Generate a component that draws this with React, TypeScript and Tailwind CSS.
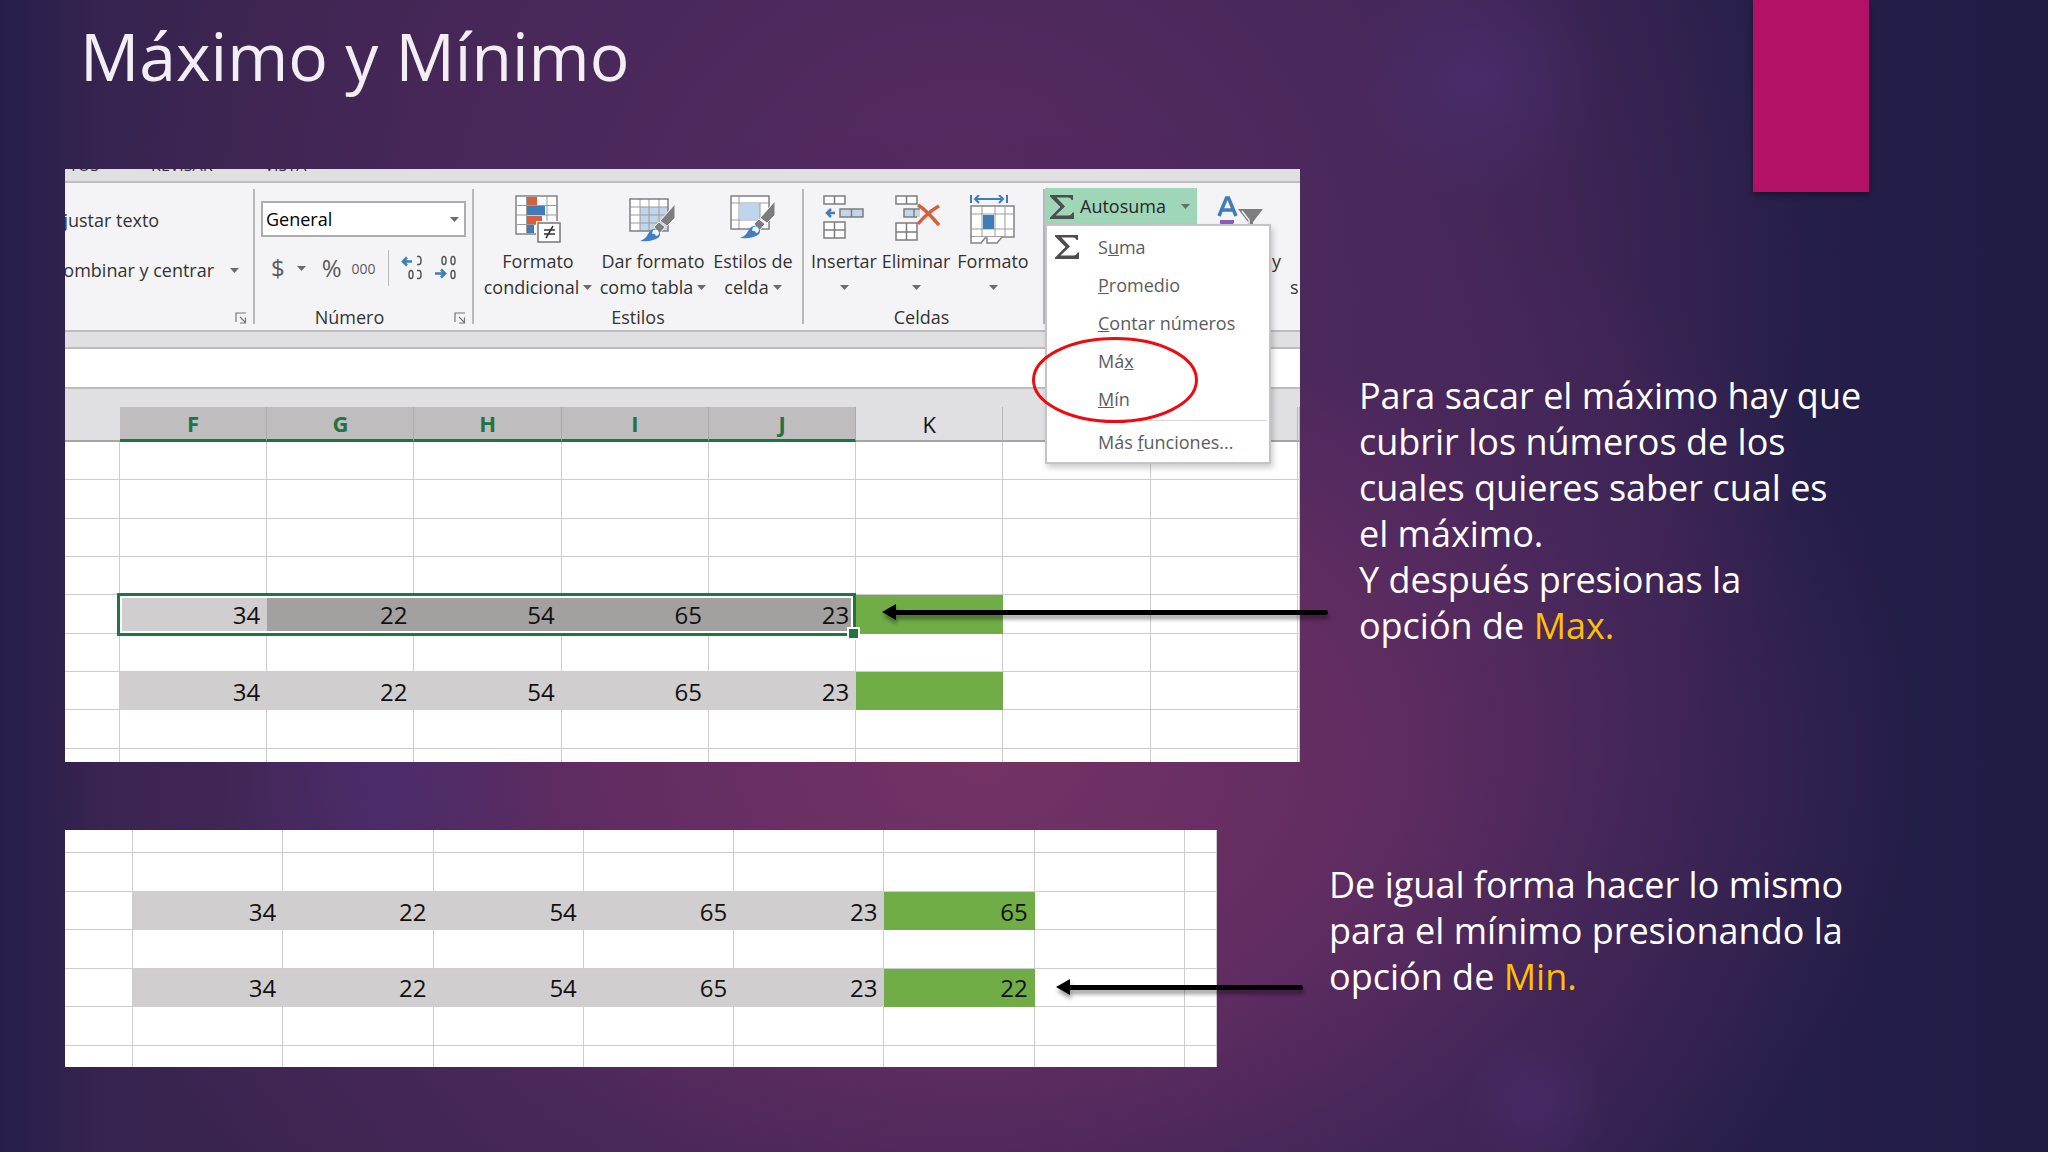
import type { ReactNode } from "react";
import clsx from "clsx";

type Fill = "gray" | "dark" | "green";

interface Cell {
  value?: string;
  fill?: Fill;
}

const VALUES = ["34", "22", "54", "65", "23"];

const blankRow = (count: number): Cell[] => Array.from({ length: count }, () => ({}));

const dataRow = (count: number, result?: string): Cell[] => [
  {},
  ...VALUES.map((value): Cell => ({ value, fill: "gray" })),
  { value: result, fill: "green" },
  ...blankRow(count - 7),
];

const selectedRow: Cell[] = dataRow(10).map((cell, i) => (i > 1 && i < 6 ? { ...cell, fill: "dark" } : cell));

const MAX_ROWS: Cell[][] = [
  blankRow(10),
  blankRow(10),
  blankRow(10),
  blankRow(10),
  selectedRow,
  blankRow(10),
  dataRow(10),
  blankRow(10),
  blankRow(10),
];

const MIN_ROWS: Cell[][] = [
  blankRow(9),
  blankRow(9),
  dataRow(9, "65"),
  blankRow(9),
  dataRow(9, "22"),
  blankRow(9),
  blankRow(9),
];

function Caret({ className }: { className?: string }) {
  return (
    <svg viewBox="0 0 9 5" className={clsx("w-[9px] h-[5px] shrink-0", className)} fill="#6b6b6b" aria-hidden="true">
      <path d="M0 0h9L4.500 5z" />
    </svg>
  );
}

function Launcher({ label }: { label: string }) {
  return (
    <button aria-label={label} className="absolute right-[6px] bottom-0">
      <svg viewBox="0 0 12 12" className="w-3 h-3" fill="none" stroke="#777" strokeWidth="1.2">
        <path d="M1 10V1h10M5 5l5 5M10.500 5.500V11H5" />
      </svg>
    </button>
  );
}

function Sigma({ className }: { className?: string }) {
  return (
    <svg viewBox="0 0 24 24" className={clsx("w-6 h-6 shrink-0", className)} fill="#4d4d4d" aria-hidden="true">
      <path d="M0 0h23v5h-1.500Q21 2.500 18 2.500H6.500L15 11.500 5.500 20.500H18q3.500 0 4.500-3H24V24H0v-1.500L10.500 12 0 1.500z" />
    </svg>
  );
}

function Brush() {
  return (
    <g>
      <path d="M46 9v14L38 31l-7-5z" fill="#7d7d7d" stroke="#f4f3f5" />
      <path d="M30 27l6 5-5 6-6-6z" fill="#7d7d7d" stroke="#f4f3f5" />
      <path d="M11 46q6-2 8-7 3-6 9-5 5 4 2 8-5 5-19 4z" fill="#3f7fc1" />
      <path d="M24 35q6-2 6 4-1 2-3 2-1-3-4-2z" fill="#f4f6fa" />
    </g>
  );
}

function ConditionalIcon() {
  return (
    <svg viewBox="0 0 48 48" className="w-12 h-12" aria-hidden="true">
      <path d="M2 1h41v38H2z" fill="#fff" stroke="#838383" strokeWidth="1.500" />
      <path d="M2 10.500h41M2 20h41M2 29.500h41M12.500 1v38M33 1v38" stroke="#9b9b9b" fill="none" />
      <path d="M13 2h10v8H13zM13 21h15v8H13z" fill="#d75f3a" />
      <path d="M13 11h18v9H13zM13 30h7v8h-7z" fill="#3f7db8" />
      <path d="M22 26h26v22H22z" fill="#f4f3f5" />
      <path d="M24 28h22v19H24z" fill="#fff" stroke="#777" strokeWidth="1.500" />
      <path d="M30 35h11M30 39h11M39 31l-7 12" stroke="#333" strokeWidth="1.500" fill="none" />
    </svg>
  );
}

function TableFormatIcon() {
  return (
    <svg viewBox="0 0 48 48" className="w-12 h-12" aria-hidden="true">
      <path d="M1 4h38v32H1z" fill="#fff" />
      <path d="M11 12h28v24H11z" fill="#c0d5ec" />
      <path d="M1 12h38M1 20h38M1 28h38M11 4v32M20 4v32M30 4v32" stroke="#9b9b9b" fill="none" />
      <path d="M1 4h38v32H1z" fill="none" stroke="#808080" strokeWidth="1.500" />
      <Brush />
    </svg>
  );
}

function CellStylesIcon() {
  return (
    <svg viewBox="0 0 48 48" className="w-12 h-12" aria-hidden="true">
      <path d="M2 1h38v33H2z" fill="#fff" />
      <path d="M11 9h20v15H11z" fill="#bfd5ec" />
      <path d="M2 8h38M2 25h29M10 1v33M31 8v17" stroke="#9b9b9b" fill="none" />
      <path d="M2 1h38v33H2z" fill="none" stroke="#808080" strokeWidth="1.500" />
      <g transform="translate(0 -3)">
        <Brush />
      </g>
    </svg>
  );
}

function InsertIcon() {
  return (
    <svg viewBox="0 0 48 48" className="w-12 h-12" strokeWidth="1.500" aria-hidden="true">
      <path d="M4 1h21v8H4zM4 27h21v16H4z" fill="#fff" stroke="#7d7d7d" />
      <path d="M14.500 1v8M14.500 27v16M4 35h21" fill="none" stroke="#7d7d7d" />
      <path d="M20 14h23v8H20z" fill="#c3d5ea" stroke="#7d7d7d" />
      <path d="M31.500 14v8" stroke="#7d7d7d" />
      <path d="M15 18H7M11 14l-4 4 4 4" fill="none" stroke="#3f7db8" strokeWidth="2.500" />
    </svg>
  );
}

function DeleteIcon() {
  return (
    <svg viewBox="0 0 48 48" className="w-12 h-12" strokeWidth="1.500" aria-hidden="true">
      <path d="M4 1h21v8H4zM4 28h21v17H4z" fill="#fff" stroke="#7d7d7d" />
      <path d="M14.500 1v8M14.500 28v17M4 37h21" fill="none" stroke="#7d7d7d" />
      <path d="M12 14h16v8H12z" fill="#c3d5ea" />
      <path d="M28 14H12v8h13M22 14v8" fill="none" stroke="#7d7d7d" />
      <path d="M26 10q8 5 21 20M47 11Q36 17 26 29" fill="none" stroke="#d75f3a" strokeWidth="3.500" />
    </svg>
  );
}

function CellFormatIcon() {
  return (
    <svg viewBox="0 0 48 52" className="w-12 h-[52px]" aria-hidden="true">
      <path d="M2 0v8M38 0v8M6 4h28M10 0L6 4l4 4M30 0l4 4-4 4" fill="none" stroke="#3f7db8" strokeWidth="2" />
      <path d="M2 11h43v31H2z" fill="#fff" stroke="#838383" strokeWidth="1.500" />
      <path d="M2 19h43M2 34h43M13 11v31M26 11v31M36 11v31" fill="none" stroke="#9b9b9b" />
      <path d="M14 20h11v14H14z" fill="#3f7db8" />
      <path d="M2 42v6h10l4-5h2v5h10l5-6" fill="#fff" stroke="#838383" strokeWidth="1.500" />
    </svg>
  );
}

interface RibbonButtonProps {
  icon: ReactNode;
  first: string;
  second?: string;
  className?: string;
}

function RibbonButton({ icon, first, second, className }: RibbonButtonProps) {
  return (
    <button className={clsx("flex flex-col items-center h-[106px] leading-[26px] whitespace-nowrap", className)}>
      <span className="h-[53px]">{icon}</span>
      <span>{first}</span>
      <span className="flex items-center gap-1 h-[26px]">
        {second}
        <Caret />
      </span>
    </button>
  );
}

interface GroupProps {
  label?: string;
  labelClass?: string;
  className?: string;
  children: ReactNode;
}

function Group({ label, labelClass, className, children }: GroupProps) {
  return (
    <div className={clsx("relative flex flex-col shrink-0 my-[6px] border-r-2 border-[#b9b8ba]", className)}>
      <div className="flex-1">{children}</div>
      {label && <div className={clsx("h-[22px] -mb-1 leading-[22px] text-center", labelClass)}>{label}</div>}
    </div>
  );
}

function SumMenu() {
  return (
    <div className="absolute z-10 left-0 top-[41px] w-[226px] h-[240px] bg-white border-2 border-[#c4c3c5] shadow-[2px_4px_6px_rgba(0,0,0,0.2)] text-[#5c5c60]">
      <button className="flex items-center w-full h-[38px] mt-[2px] pl-2">
        <Sigma />
        <span className="pl-[19px]">S<u>u</u>ma</span>
      </button>
      <button className="block w-full h-[38px] pl-[51px] text-left"><u>P</u>romedio</button>
      <button className="block w-full h-[38px] pl-[51px] text-left"><u>C</u>ontar números</button>
      <button className="block w-full h-[38px] pl-[51px] text-left">Má<u>x</u></button>
      <button className="block w-full h-[38px] pl-[51px] text-left"><u>M</u>ín</button>
      <div className="h-px mt-[2px] ml-[50px] mr-[2px] bg-[#d5d5d7]" />
      <button className="block w-full h-[42px] pl-[51px] text-left">Más <u>f</u>unciones...</button>
      <svg viewBox="0 0 168 88" className="absolute -left-4 top-[110px] w-[168px] h-[88px] pointer-events-none" aria-hidden="true">
        <ellipse cx="84" cy="44" rx="81.500" ry="41.500" fill="none" stroke="#ee0a0f" strokeWidth="3" />
      </svg>
    </div>
  );
}

function Ribbon() {
  return (
    <div className="flex h-[149px] bg-[#f4f3f5] border-b-2 border-[#bdbcbe] text-[18px] text-[#333]">
      <Group className="w-[190px]">
        <div className="-ml-[13px] pt-[18px] whitespace-nowrap">
          <button className="block h-[26px] leading-[26px]">Ajustar texto</button>
          <button className="flex items-center gap-4 h-[26px] mt-6 leading-[26px]">
            Combinar y centrar
            <Caret />
          </button>
        </div>
        <Launcher label="Alineación" />
      </Group>

      <Group label="Número" labelClass="pr-7" className="w-[219px]">
        <div className="relative mt-3 mx-[6px]">
          <select aria-label="Formato de número" className="appearance-none block w-full h-9 px-[3px] bg-white border-2 border-[#adacae] text-black">
            <option>General</option>
          </select>
          <Caret className="absolute right-[7px] top-4 pointer-events-none" />
        </div>
        <div className="flex items-center h-9 mt-[13px] pl-4 text-[#5b5b5b]">
          <button className="flex items-center gap-3">
            <span className="text-[24px] leading-9">$</span>
            <Caret />
          </button>
          <button className="ml-4 text-[24px] leading-9">%</button>
          <button className="ml-[10px] text-[14px]">000</button>
          <span className="w-px h-9 ml-3 bg-[#b9b8ba]" />
          <button aria-label="Aumentar decimales" className="ml-3">
            <svg viewBox="0 0 22 26" className="w-[22px] h-[26px]" fill="none" stroke="#555" strokeWidth="1.500">
              <path d="M11 6.500H2M6 2.500l-4 4 4 4" stroke="#3f7db8" strokeWidth="2.500" />
              <path d="M16 1.500h2q2 0 2 4t-2 4h-2M10 15.500q2 0 2 4t-2 4-2-4 2-4zM16 15.500h2q2 0 2 4t-2 4h-2" />
            </svg>
          </button>
          <button aria-label="Disminuir decimales" className="ml-3">
            <svg viewBox="0 0 22 26" className="w-[22px] h-[26px]" fill="none" stroke="#555" strokeWidth="1.500">
              <path d="M0 18.500h10M6 14.500l4 4-4 4" stroke="#3f7db8" strokeWidth="2.500" />
              <path d="M9 1.500q2 0 2 4t-2 4-2-4 2-4zM18 1.500q2 0 2 4t-2 4-2-4 2-4zM18 15.500q2 0 2 4t-2 4-2-4 2-4z" />
            </svg>
          </button>
        </div>
        <Launcher label="Formato de número" />
      </Group>

      <Group label="Estilos" className="w-[330px]">
        <div className="flex pl-[6px] pt-[6px]">
          <RibbonButton icon={<ConditionalIcon />} first="Formato" second="condicional" className="w-[116px]" />
          <RibbonButton icon={<TableFormatIcon />} first="Dar formato" second="como tabla" className="w-[114px]" />
          <RibbonButton icon={<CellStylesIcon />} first="Estilos de" second="celda" className="w-[86px]" />
        </div>
      </Group>

      <Group label="Celdas" labelClass="pr-1" className="w-[241px] border-r-0">
        <div className="flex pl-[4px] pt-[6px]">
          <RibbonButton icon={<InsertIcon />} first="Insertar" className="w-[72px]" />
          <RibbonButton icon={<DeleteIcon />} first="Eliminar" className="w-[72px]" />
          <RibbonButton icon={<CellFormatIcon />} first="Formato" className="w-[82px]" />
        </div>
      </Group>

      <div className="relative flex flex-1 pt-[5px]">
        <button className="flex items-center w-[152px] h-[37px] shrink-0 pl-[5px] pr-[7px] bg-[#a0d6b8] text-[#262626]">
          <Sigma />
          <span className="flex-1 pl-[6px] text-left">Autosuma</span>
          <Caret />
        </button>
        <SumMenu />
        <div className="flex-1 overflow-hidden pl-[20px] whitespace-nowrap">
          <svg viewBox="0 0 46 54" className="w-[46px] h-[54px]" aria-hidden="true">
            <path d="M2 28L9.500 10h2L19 28M5 22h11" fill="none" stroke="#3f7db8" strokeWidth="3.500" />
            <path d="M3 32h14v3L8 42H3z" fill="#8b5fb5" />
            <path d="M21 21h25L36 34v12l-5-4v-8z" fill="#7d7d7d" />
            <path d="M25 23l7 9v8" fill="none" stroke="#eee" strokeWidth="1.500" />
          </svg>
          <div className="leading-[26px] pt-[6px] pl-[55px]">y</div>
          <div className="leading-[26px] pl-[73px]">s</div>
        </div>
      </div>
    </div>
  );
}

interface SheetProps {
  rows: Cell[][];
  label: string;
  firstCol: string;
  lastCol: string;
  className: string;
  head?: ReactNode;
  selected?: number;
}

function Sheet({ rows, label, firstCol, lastCol, className, head, selected }: SheetProps) {
  const count = rows[0].length;
  return (
    <table aria-label={label} className={clsx("table-fixed w-full border-separate border-spacing-0 text-[24px] leading-[30px] text-[#111]", className)}>
      <colgroup>
        {rows[0].map((_, i) => (
          <col key={i} className={i === 0 ? firstCol : i === count - 1 ? lastCol : undefined} />
        ))}
      </colgroup>
      {head}
      <tbody>
        {rows.map((row, r) => (
          <tr key={r} className="h-[38px]">
            {row.map((cell, c) => (
              <td
                key={c}
                className={clsx(
                  "relative p-0 pt-[2px] pr-[6px] text-right border-r border-b",
                  !cell.fill && "border-[#cdccce]",
                  cell.fill === "gray" && "bg-[#d1cecf] border-[#d1cecf]",
                  cell.fill === "dark" && "bg-[#a3a0a0] border-[#a3a0a0]",
                  cell.fill === "green" && "bg-[#70ad47] border-[#70ad47]"
                )}
              >
                {cell.value}
                {r === selected && c === 1 && (
                  <div className="absolute z-10 -left-[3px] -top-[2px] -bottom-[3px] w-[calc(500%+8px)] border-3 border-[#217346] pointer-events-none">
                    <div className="h-full border-2 border-white" />
                    <div className="absolute -right-[5px] -bottom-[5px] w-[9px] h-[9px] bg-[#217346] outline-2 outline-white" />
                  </div>
                )}
              </td>
            ))}
          </tr>
        ))}
      </tbody>
    </table>
  );
}

function SheetHead() {
  return (
    <thead>
      <tr className="h-[35px] text-[22px]">
        <th className="p-0 bg-[#e0dfe1] border-b-2 border-[#a5a5a5]" />
        {["F", "G", "H", "I", "J"].map((name) => (
          <th key={name} scope="col" className="p-0 bg-[#bfbdbe] border-r border-r-[#acabac] border-b-3 border-b-[#217346] text-[#217346] font-bold">
            {name}
          </th>
        ))}
        {["K", "", "", ""].map((name, i) => (
          <th key={i} scope="col" className="p-0 bg-[#e0dfe1] border-r border-r-[#b5b4b6] border-b-2 border-b-[#a5a5a5] font-normal">
            {name}
          </th>
        ))}
      </tr>
    </thead>
  );
}

function Arrow({ className }: { className: string }) {
  return (
    <div className={clsx("absolute z-10 flex items-center h-4 drop-shadow-[1px_4px_2px_rgba(0,0,0,0.4)]", className)}>
      <svg viewBox="0 0 14 16" className="w-[14px] h-4 shrink-0" aria-hidden="true">
        <path d="M0 8L14 0v16z" />
      </svg>
      <div className="flex-1 h-[5px] -ml-px rounded-r-sm bg-black" />
    </div>
  );
}

export default function App() {
  return (
    <main className="relative min-h-screen overflow-hidden bg-[#2a2050] bg-[linear-gradient(90deg,rgba(32,28,72,0.7)_0%,transparent_5%),radial-gradient(circle_at_72%_7%,rgba(74,48,120,0.6),transparent_7%),radial-gradient(circle_at_75%_96%,rgba(78,46,120,0.5),transparent_4%),radial-gradient(circle_at_19%_68%,rgba(75,48,125,0.5),transparent_9%),radial-gradient(ellipse_46%_58%_at_48%_66%,#743265_0%,#632d62_38%,rgba(75,40,93,0.7)_70%,transparent_100%),radial-gradient(ellipse_42%_75%_at_47%_25%,#582b60_0%,#4a285b_50%,transparent_100%),linear-gradient(90deg,#35234f_0%,#43264f_35%,#34224e_68%,#241e48_88%,#201c44_100%)] font-['Open_Sans','Noto_Sans',sans-serif]">
      <div className="absolute right-[179px] top-0 w-[116px] h-[192px] bg-[#b31166] shadow-[0_3px_6px_rgba(0,0,0,0.4)]" />

      <h1 className="h-[169px] pt-[10px] pl-[80px] text-[66px] leading-[90px] text-[#f2eef4]">Máximo y Mínimo</h1>

      <section className="flex items-start">
        <div className="relative w-[60.3%] shrink-0 ml-[65px]">
          <div className="h-[593px] overflow-hidden bg-white">
            <div className="h-[14px] overflow-hidden bg-[#e0dfe1] border-b-2 border-[#bdbcbe]">
              <nav className="flex gap-[52px] -mt-[14px] pl-1 text-[16px] leading-[20px] text-[#333]">
                <a href="#datos">TOS</a>
                <a href="#revisar">REVISAR</a>
                <a href="#vista">VISTA</a>
              </nav>
            </div>
            <Ribbon />
            <div className="h-[17px] bg-[#e0dfe1] border-b-2 border-[#bdbcbe]" />
            <div className="h-[40px] bg-white border-b-2 border-[#bdbcbe]" />
            <div className="h-[18px] bg-[#e0dfe1]" />
            <Sheet
              rows={MAX_ROWS}
              label="Selección para el máximo"
              firstCol="w-[55px]"
              lastCol="w-[2px]"
              className="h-[380px]"
              head={<SheetHead />}
              selected={4}
            />
          </div>
          <Arrow className="left-[817px] top-[435px] w-[446px]" />
        </div>
        <p className="ml-[59px] mt-[204px] text-[36px] leading-[46px] text-white whitespace-nowrap">
          Para sacar el máximo hay que<br />
          cubrir los números de los<br />
          cuales quieres saber cual es<br />
          el máximo.<br />
          Y después presionas la<br />
          opción de <span className="text-[#ffc000]">Max.</span>
        </p>
      </section>

      <section className="flex items-start mt-[68px]">
        <div className="relative w-[56.25%] shrink-0 ml-[65px]">
          <div className="h-[237px] overflow-hidden bg-white">
            <Sheet
              rows={MIN_ROWS}
              label="Resultados del máximo y el mínimo"
              firstCol="w-[68px]"
              lastCol="w-[32px]"
              className="h-[269px] -mt-[15px]"
            />
          </div>
          <Arrow className="left-[991px] top-[149px] w-[247px]" />
        </div>
        <p className="ml-[112px] mt-[32px] text-[36px] leading-[46px] text-white whitespace-nowrap">
          De igual forma hacer lo mismo<br />
          para el mínimo presionando la<br />
          opción de <span className="text-[#ffc000]">Min.</span>
        </p>
      </section>
    </main>
  );
}
